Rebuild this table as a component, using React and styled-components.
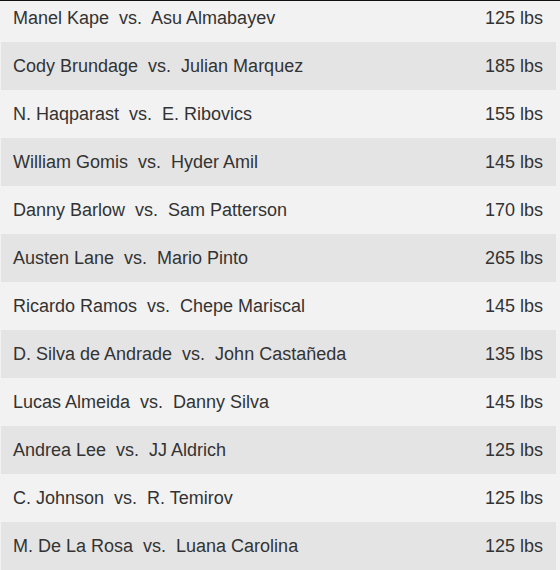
import React from "react"
import styled, { createGlobalStyle } from "styled-components"

const GlobalStyle = createGlobalStyle`
  html, body {
    margin: 0;
    padding: 0;
    background: #f2f2f2;
    overflow: hidden;
  }
`

const Page = styled.div`
  width: 560px;
  height: 570px;
  overflow: hidden;
  border-top: 1px solid #111;
  box-sizing: border-box;
  background: #f2f2f2;
  font-family: "Liberation Sans", Arial, sans-serif;
`

const Table = styled.div`
  width: 555px;
  margin: -7px 0 0 1px;
  display: flex;
  flex-direction: column;
`

const Row = styled.div`
  height: 48px;
  display: flex;
  align-items: center;
  justify-content: space-between;
  padding: 0 13px 0 12px;
  box-sizing: border-box;
  background: ${props => (props.shaded ? "#e4e4e4" : "#f2f2f2")};
  color: #333;
  font-size: 18px;
`

const Matchup = styled.span`
  white-space: pre;
`

const Weight = styled.span`
  white-space: nowrap;
`

const fights = [
  ["Manel Kape", "Asu Almabayev", 125],
  ["Cody Brundage", "Julian Marquez", 185],
  ["N. Haqparast", "E. Ribovics", 155],
  ["William Gomis", "Hyder Amil", 145],
  ["Danny Barlow", "Sam Patterson", 170],
  ["Austen Lane", "Mario Pinto", 265],
  ["Ricardo Ramos", "Chepe Mariscal", 145],
  ["D. Silva de Andrade", "John Castañeda", 135],
  ["Lucas Almeida", "Danny Silva", 145],
  ["Andrea Lee", "JJ Aldrich", 125],
  ["C. Johnson", "R. Temirov", 125],
  ["M. De La Rosa", "Luana Carolina", 125],
]

const App = () => (
  <>
    <GlobalStyle />
    <Page>
      <Table>
        {fights.map(([a, b, w], i) => (
          <Row key={a} shaded={i % 2 === 1}>
            <Matchup>{`${a}  vs.  ${b}`}</Matchup>
            <Weight>{w} lbs</Weight>
          </Row>
        ))}
      </Table>
    </Page>
  </>
)

export default App
